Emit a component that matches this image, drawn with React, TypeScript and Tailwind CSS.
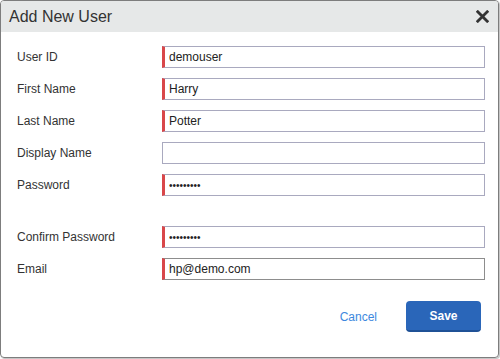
import React, { useState } from 'react';

type Field = {
  id: string;
  label: string;
  value: string;
  type?: string;
  required?: boolean;
  spaced?: boolean;
  dark?: boolean;
};

const fields: Field[] = [
  { id: 'userId', label: 'User ID', value: 'demouser', required: true },
  { id: 'firstName', label: 'First Name', value: 'Harry', required: true },
  { id: 'lastName', label: 'Last Name', value: 'Potter', required: true },
  { id: 'displayName', label: 'Display Name', value: '' },
  { id: 'password', label: 'Password', value: 'secret123', type: 'password', required: true },
  { id: 'confirm', label: 'Confirm Password', value: 'secret123', type: 'password', required: true, spaced: true },
  { id: 'email', label: 'Email', value: 'hp@demo.com', required: true, dark: true },
];

export default function App() {
  const [values, setValues] = useState<{ [key: string]: string }>(
    fields.reduce((acc, f) => ({ ...acc, [f.id]: f.value }), {})
  );

  return (
    <div className="w-[500px] h-[359px] bg-white font-['Liberation_Sans',Arial,sans-serif]">
      <div className="w-[499px] h-[358px] border border-[#7d7d7d] rounded-[4px] shadow-[1px_1px_1px_rgba(0,0,0,0.25)] overflow-hidden flex flex-col">
        {/* Header */}
        <div className="h-[31px] bg-[#e6e8e8] flex items-center justify-between pl-[8px] pr-[9px] shrink-0">
          <h2 className="text-[16px] text-[#333] leading-none pt-[1px]">Add New User</h2>
          <button className="w-[13px] h-[13px] flex items-center justify-center">
            <svg width="13" height="13" viewBox="0 0 13 13">
              <path d="M1.8 1.8 L11.2 11.2 M11.2 1.8 L1.8 11.2" stroke="#333" strokeWidth="2.8" strokeLinecap="square" />
            </svg>
          </button>
        </div>

        {/* Form */}
        <div className="flex flex-col pt-[14px]">
          {fields.map((f) => (
            <div
              key={f.id}
              className={`flex items-center h-[22px] mb-[10px] ${f.spaced ? 'mt-[20px]' : ''}`}
            >
              <label htmlFor={f.id} className="w-[161px] pl-[16px] text-[12px] text-[#333]">
                {f.label}
              </label>
              <input
                id={f.id}
                type={f.type || 'text'}
                value={values[f.id]}
                onChange={(e) => setValues({ ...values, [f.id]: e.target.value })}
                className={`w-[323px] h-[22px] bg-white ${
                  f.type === 'password' ? 'text-[10px]' : 'text-[12px]'
                } text-[#222] pl-[4px] outline-none border ${
                  f.dark ? 'border-[#8d8d8d]' : 'border-[#a9a9bf]'
                } ${f.required ? 'border-l-[3px] border-l-[#d9474a]' : ''}`}
              />
            </div>
          ))}
        </div>

        {/* Footer */}
        <div className="flex items-center justify-end pr-[17px] mt-[11px]">
          <button className="text-[12px] text-[#3d88de] mr-[29px]">Cancel</button>
          <button className="w-[75px] h-[31px] rounded-[4px] bg-[#2a66b9] border-b-[2px] border-b-[#1f5196] text-white text-[12px] font-bold">
            Save
          </button>
        </div>
      </div>
    </div>
  );
}
